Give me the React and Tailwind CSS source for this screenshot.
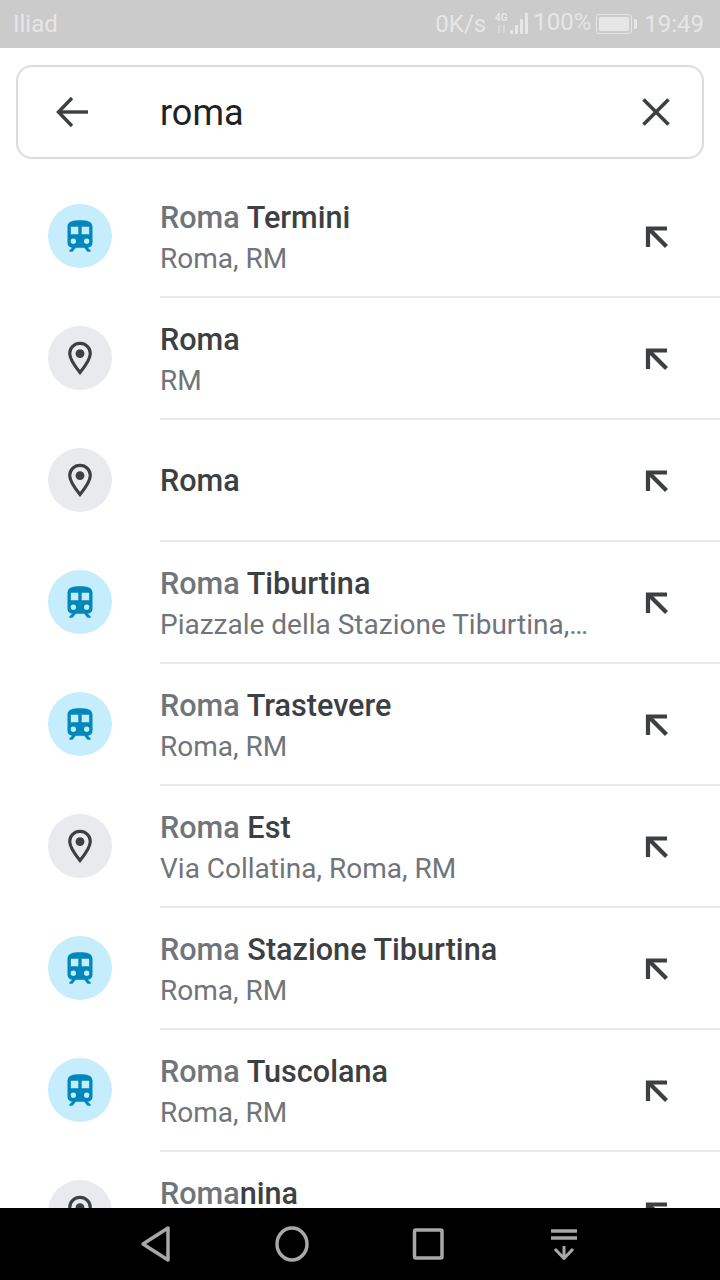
const font = "font-['Roboto',sans-serif]";

const places = [
  { kind: "train", match: "Roma", rest: " Termini", sub: "Roma, RM" },
  { kind: "pin", match: "", rest: "Roma", sub: "RM" },
  { kind: "pin", match: "", rest: "Roma", sub: "" },
  { kind: "train", match: "Roma", rest: " Tiburtina", sub: "Piazzale della Stazione Tiburtina,…" },
  { kind: "train", match: "Roma", rest: " Trastevere", sub: "Roma, RM" },
  { kind: "pin", match: "Roma", rest: " Est", sub: "Via Collatina, Roma, RM" },
  { kind: "train", match: "Roma", rest: " Stazione Tiburtina", sub: "Roma, RM" },
  { kind: "train", match: "Roma", rest: " Tuscolana", sub: "Roma, RM" },
  // second line of this one sits under the nav bar
  { kind: "pin", match: "Roma", rest: "nina", sub: "\u00a0" },
];

function TrainIcon() {
  return (
    <svg width="40" height="40" viewBox="0 0 24 24" fill="#0287bd">
      <path d="M12 2.500c-4 0-7.500.5-7.500 4v9.500c0 1.600 1.200 2.900 2.800 3L5.600 20.700v.8h1.900l2-2.400h5l2 2.400h1.900v-.8L16.700 19c1.600-.1 2.800-1.400 2.800-3V6.500c0-3.500-3.500-4-7.500-4zM6.500 6.500h4.500v4.500H6.500V6.500zm6.500 0h4.500v4.500H13V6.500zM8 13.500a1.600 1.600 0 1 1 0 3.200A1.600 1.600 0 0 1 8 13.500zm8 0a1.600 1.600 0 1 1 0 3.200 1.600 1.600 0 0 1 0-3.200z" fillRule="evenodd" />
    </svg>
  );
}

function PinIcon() {
  return (
    <svg width="38" height="38" viewBox="0 0 24 24" fill="none">
      <path d="M12 2.800c-3.700 0-6.500 2.800-6.500 6.400 0 3.900 3.900 8.800 6.500 12 2.600-3.200 6.500-8.100 6.500-12 0-3.600-2.800-6.400-6.500-6.400z" stroke="#3c4043" strokeWidth="2" />
      <circle cx="12" cy="9.200" r="2.800" fill="#3c4043" />
    </svg>
  );
}

function FillArrow() {
  return (
    <svg width="28" height="28" viewBox="0 0 28 28" fill="none" stroke="#3c4043" strokeWidth="4.200">
      <path d="M6 25V6.500H25" />
      <path d="M6.500 6.500 24.500 24.500" />
    </svg>
  );
}

function StatusBar() {
  return (
    <div className={`h-12 shrink-0 bg-[#cbcbcb] flex items-center justify-between pl-[13px] pr-4 text-[#e6e6e6] text-2xl ${font}`}>
      <span>Iliad</span>
      <div className="flex items-center">
        <span>0K/s</span>
        <svg className="ml-[9px]" width="36" height="24" viewBox="0 0 36 24" fill="#e6e6e6">
          <text x="0" y="9" fontSize="10" fontWeight="700">4G</text>
          <rect x="3" y="13" width="2" height="8" opacity="0.5" />
          <rect x="8" y="13" width="2" height="8" opacity="0.5" />
          <rect x="15" y="18" width="3" height="4" />
          <rect x="20" y="13" width="3" height="9" />
          <rect x="25" y="7" width="3" height="15" />
          <rect x="30" y="1" width="3" height="21" />
        </svg>
        <span className="ml-[2px] -mt-1">100%</span>
        <div className="ml-[5px] w-[36px] h-[20px] border border-[#e6e6e6] rounded-[3px] p-[2px]">
          <div className="w-full h-full bg-[#e6e6e6]" />
        </div>
        <div className="ml-[2px] w-[3px] h-[10px] bg-[#e6e6e6]" />
        <span className="ml-[7px]">19:49</span>
      </div>
    </div>
  );
}

function SearchBox() {
  return (
    <div className="shrink-0 pt-[17px] px-4 pb-[17px] bg-white">
      <div className="h-[94px] border-2 border-[#dadce0] rounded-2xl flex items-center pl-[38px] pr-[31px]">
        <svg width="32" height="32" viewBox="0 0 32 32" fill="none" stroke="#3c4043" strokeWidth="3.400">
          <path d="M32 16H3" />
          <path d="M16 2 2.500 16 16 30" />
        </svg>
        <span className={`ml-[72px] pt-[2px] flex-1 text-[36px] text-[#202124] ${font}`}>roma</span>
        <svg width="30" height="30" viewBox="0 0 30 30" fill="none" stroke="#3c4043" strokeWidth="3.600">
          <path d="M2.500 2.500 27.500 27.500M27.500 2.500 2.500 27.500" />
        </svg>
      </div>
    </div>
  );
}

function PlaceRow({ place }) {
  const isTrain = place.kind === "train";
  return (
    <div className="flex h-[122px] shrink-0">
      <div className="w-[160px] shrink-0 pl-12 pb-[2px] flex items-center">
        <div className={`w-16 h-16 rounded-full flex items-center justify-center ${isTrain ? "bg-[#c5edfb]" : "bg-[#e8eaed]"}`}>
          {isTrain ? <TrainIcon /> : <PinIcon />}
        </div>
      </div>
      <div className="flex-1 min-w-0 flex items-center border-b-2 border-[#e8eaed]">
        <div className={`w-[428px] min-w-0 ${place.sub ? "pt-[5px]" : "pt-[2px]"} ${font}`}>
          <div className="text-[30.6px] leading-[40px] font-medium text-[#3c4043] whitespace-pre">
            <span className="text-[#70757a]">{place.match}</span>
            {place.rest}
          </div>
          {place.sub && (
            <div className="mt-[1px] text-[28px] leading-[40px] text-[#70757a] whitespace-nowrap">{place.sub}</div>
          )}
        </div>
        <div className="ml-[54px]">
          <FillArrow />
        </div>
      </div>
    </div>
  );
}

function NavBar() {
  return (
    <div className="h-[72px] shrink-0 bg-black flex items-center justify-center">
      <svg width="720" height="72" viewBox="0 0 720 72" fill="none" stroke="#a8a8a8" strokeWidth="3.500" strokeLinejoin="round">
        <path d="M168 20v32l-25-16z" />
        <ellipse cx="292" cy="36" rx="15" ry="16" />
        <rect x="414.500" y="22" width="27.500" height="28" rx="1.500" />
        <path d="M551 23h26M551 30h26" />
        <path d="M564 38v12M555 41l9 9.500 9-9.500" strokeWidth="3" />
      </svg>
    </div>
  );
}

export default function App() {
  return (
    <div className="w-[720px] h-[1280px] flex flex-col bg-white overflow-hidden">
      <StatusBar />
      <SearchBox />
      <div className="flex-1 min-h-0 overflow-hidden flex flex-col">
        {places.map((p, i) => (
          <PlaceRow key={i} place={p} />
        ))}
      </div>
      <NavBar />
    </div>
  );
}
